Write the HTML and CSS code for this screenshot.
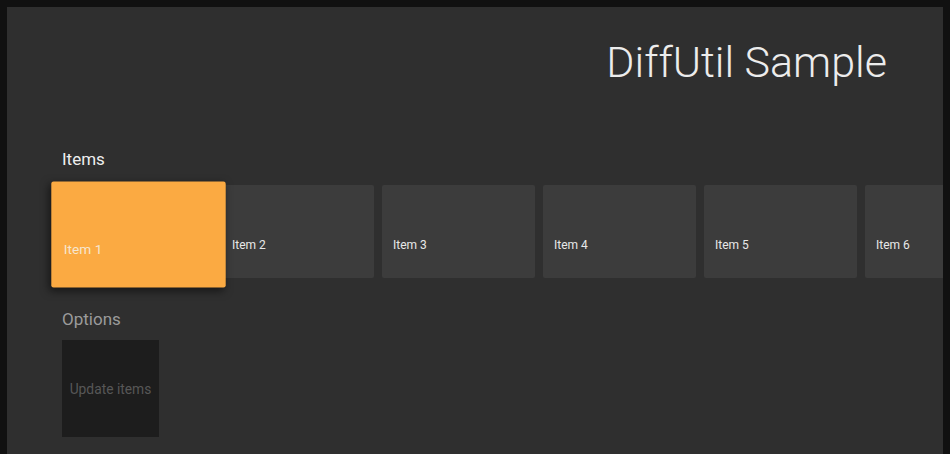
FILE: index.html
```html
<!DOCTYPE html>
<html>
<head>
<meta charset="utf-8">
<link rel="stylesheet" href="styles.css">
</head>
<body>
<div class="screen">
  <header class="header">
    <h1 class="title">DiffUtil Sample</h1>
  </header>
  <section class="section">
    <h2 class="heading">Items</h2>
    <div class="row row-items">
      <div class="card card-focused"><span class="card-text">Item 1</span></div>
      <div class="card"><span class="card-text">Item 2</span></div>
      <div class="card"><span class="card-text">Item 3</span></div>
      <div class="card"><span class="card-text">Item 4</span></div>
      <div class="card"><span class="card-text">Item 5</span></div>
      <div class="card"><span class="card-text">Item 6</span></div>
    </div>
  </section>
  <section class="section section-options">
    <h2 class="heading heading-dim">Options</h2>
    <div class="row">
      <div class="action"><span class="action-text">Update items</span></div>
    </div>
  </section>
</div>
</body>
</html>
```

FILE: styles.css
```css
html, body {
  margin: 0;
  padding: 0;
  background: #111111;
  overflow: hidden;
}

body {
  width: 950px;
  height: 454px;
  font-family: Roboto, "Liberation Sans", sans-serif;
}

.screen {
  margin: 7px 7px 0 7px;
  height: 447px;
  background: #2f2f2f;
  overflow: hidden;
}

.header {
  display: flex;
  justify-content: flex-end;
  padding: 31px 56px 0 0;
}

.title {
  margin: 0;
  font-size: 43px;
  font-weight: 300;
  color: #ececec;
  line-height: 49px;
  white-space: nowrap;
}

.section {
  padding-left: 55px;
}

.heading {
  margin: 0;
  font-size: 17px;
  font-weight: 400;
  color: #eeeeee;
  line-height: 20px;
}

.header + .section {
  margin-top: 62px;
}

.header + .section .heading {
  margin-bottom: 16px;
}

.row {
  display: flex;
  gap: 8px;
}

.row-items {
  margin-left: -2px;
}

.card {
  flex: 0 0 153px;
  height: 93px;
  box-sizing: border-box;
  padding: 53px 0 0 11px;
  background: #3c3c3c;
  border-radius: 2px;
}

.card-text {
  display: block;
  font-size: 12px;
  line-height: 14px;
  color: #e8e8e8;
}

.card-focused {
  position: relative;
  z-index: 2;
  background: #fbaa42;
  transform: translate(2px, 3px) scale(1.14);
  box-shadow: -2px 3px 7px rgba(0, 0, 0, 0.55);
}

.card-focused .card-text {
  color: #f6e6cf;
}

.section-options {
  margin-top: 31px;
}

.heading-dim {
  color: #9b9b9b;
  margin-bottom: 11px;
}

.action {
  width: 97px;
  height: 97px;
  background: #1d1d1d;
  display: flex;
  align-items: center;
  justify-content: center;
}

.action-text {
  font-size: 13.8px;
  color: #575757;
  white-space: nowrap;
  margin-top: 0;
}
```
